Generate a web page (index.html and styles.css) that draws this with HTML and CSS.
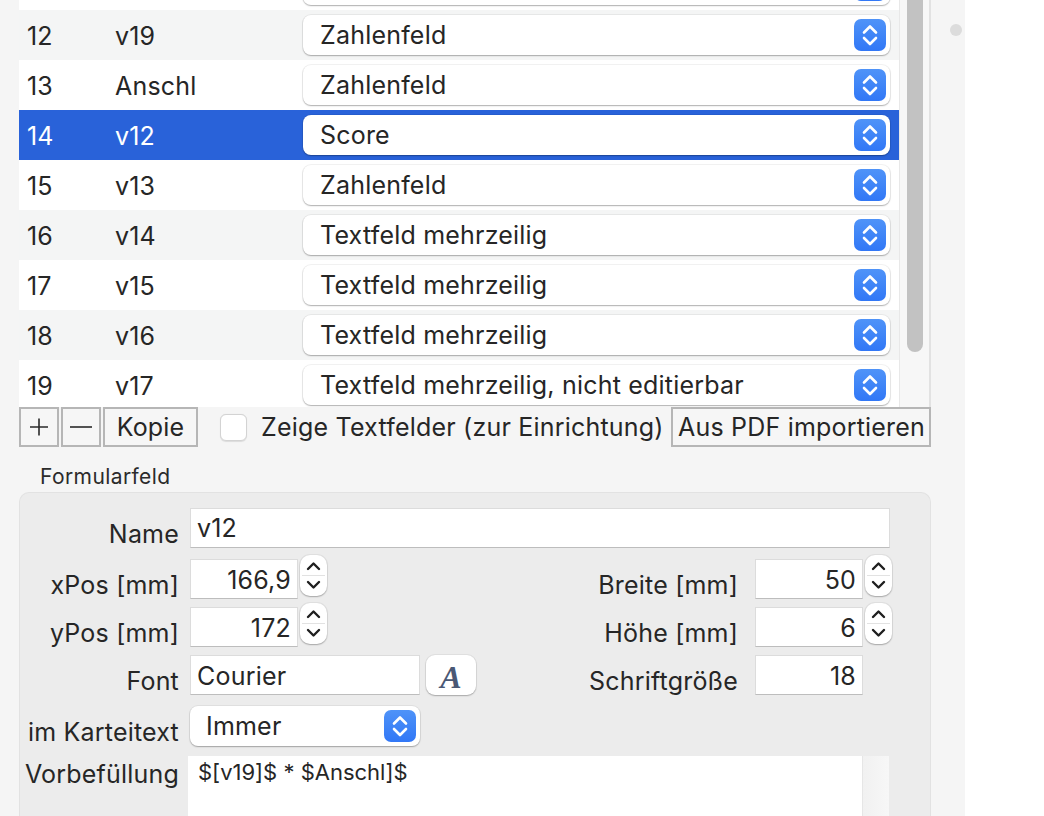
FILE: index.html
```html
<!DOCTYPE html>
<html lang="de">
<head>
<meta charset="utf-8">
<title>Formularfelder</title>
<link rel="stylesheet" href="styles.css">
</head>
<body>
<div class="app">
  <div class="main">
    <div class="content">
      <div class="table">
        <div class="rows">
          <div class="row">
            <div class="num"></div><div class="name"></div>
            <div class="popup"><span class="plbl"></span><span class="chev"><svg viewBox="0 0 32 32" width="32" height="32"><path d="M10 13.5 L16 7.5 L22 13.5 M10 19 L16 25 L22 19" fill="none" stroke="#fff" stroke-width="2.6" stroke-linecap="round" stroke-linejoin="round"/></svg></span></div>
          </div>
          <div class="row alt">
            <div class="num">12</div><div class="name">v19</div>
            <div class="popup"><span class="plbl">Zahlenfeld</span><span class="chev"><svg viewBox="0 0 32 32" width="32" height="32"><path d="M10 13.5 L16 7.5 L22 13.5 M10 19 L16 25 L22 19" fill="none" stroke="#fff" stroke-width="2.6" stroke-linecap="round" stroke-linejoin="round"/></svg></span></div>
          </div>
          <div class="row">
            <div class="num">13</div><div class="name">Anschl</div>
            <div class="popup"><span class="plbl">Zahlenfeld</span><span class="chev"><svg viewBox="0 0 32 32" width="32" height="32"><path d="M10 13.5 L16 7.5 L22 13.5 M10 19 L16 25 L22 19" fill="none" stroke="#fff" stroke-width="2.6" stroke-linecap="round" stroke-linejoin="round"/></svg></span></div>
          </div>
          <div class="row sel">
            <div class="num">14</div><div class="name">v12</div>
            <div class="popup"><span class="plbl">Score</span><span class="chev"><svg viewBox="0 0 32 32" width="32" height="32"><path d="M10 13.5 L16 7.5 L22 13.5 M10 19 L16 25 L22 19" fill="none" stroke="#fff" stroke-width="2.6" stroke-linecap="round" stroke-linejoin="round"/></svg></span></div>
          </div>
          <div class="row">
            <div class="num">15</div><div class="name">v13</div>
            <div class="popup"><span class="plbl">Zahlenfeld</span><span class="chev"><svg viewBox="0 0 32 32" width="32" height="32"><path d="M10 13.5 L16 7.5 L22 13.5 M10 19 L16 25 L22 19" fill="none" stroke="#fff" stroke-width="2.6" stroke-linecap="round" stroke-linejoin="round"/></svg></span></div>
          </div>
          <div class="row alt">
            <div class="num">16</div><div class="name">v14</div>
            <div class="popup"><span class="plbl">Textfeld mehrzeilig</span><span class="chev"><svg viewBox="0 0 32 32" width="32" height="32"><path d="M10 13.5 L16 7.5 L22 13.5 M10 19 L16 25 L22 19" fill="none" stroke="#fff" stroke-width="2.6" stroke-linecap="round" stroke-linejoin="round"/></svg></span></div>
          </div>
          <div class="row">
            <div class="num">17</div><div class="name">v15</div>
            <div class="popup"><span class="plbl">Textfeld mehrzeilig</span><span class="chev"><svg viewBox="0 0 32 32" width="32" height="32"><path d="M10 13.5 L16 7.5 L22 13.5 M10 19 L16 25 L22 19" fill="none" stroke="#fff" stroke-width="2.6" stroke-linecap="round" stroke-linejoin="round"/></svg></span></div>
          </div>
          <div class="row alt">
            <div class="num">18</div><div class="name">v16</div>
            <div class="popup"><span class="plbl">Textfeld mehrzeilig</span><span class="chev"><svg viewBox="0 0 32 32" width="32" height="32"><path d="M10 13.5 L16 7.5 L22 13.5 M10 19 L16 25 L22 19" fill="none" stroke="#fff" stroke-width="2.6" stroke-linecap="round" stroke-linejoin="round"/></svg></span></div>
          </div>
          <div class="row">
            <div class="num">19</div><div class="name">v17</div>
            <div class="popup"><span class="plbl">Textfeld mehrzeilig, nicht editierbar</span><span class="chev"><svg viewBox="0 0 32 32" width="32" height="32"><path d="M10 13.5 L16 7.5 L22 13.5 M10 19 L16 25 L22 19" fill="none" stroke="#fff" stroke-width="2.6" stroke-linecap="round" stroke-linejoin="round"/></svg></span></div>
          </div>
        </div>
        <div class="scrollbar"><div class="thumb"></div></div>
      </div>

      <div class="toolbar">
        <div class="tbtn tb-plus"><svg viewBox="0 0 20 20" width="20" height="20"><path d="M1 10 H19 M10 1.5 V18.5" stroke="#2a2a2a" stroke-width="1.6" fill="none"/></svg></div>
        <div class="tbtn tb-minus"><svg viewBox="0 0 22 4" width="22" height="4"><path d="M0 2 H22" stroke="#2a2a2a" stroke-width="1.6" fill="none"/></svg></div>
        <div class="tbtn tb-copy">Kopie</div>
        <div class="checkbox"></div>
        <div class="cblabel">Zeige Textfelder (zur Einrichtung)</div>
        <div class="tbtn tb-import">Aus PDF importieren</div>
      </div>

      <div class="section-title">Formularfeld</div>

      <div class="group">
        <div class="frow r-name">
          <div class="flabel">Name</div>
          <div class="field f-name">v12</div>
        </div>
        <div class="frow r-xpos">
          <div class="flabel">xPos [mm]</div>
          <div class="field f-num">166,9</div>
          <div class="stepper"><svg viewBox="0 0 27 41" width="27" height="41"><path d="M2 20.5 H25" stroke="#e2e2e2" stroke-width="1"/><path d="M8 14 L13.5 8.5 L19 14 M8 27 L13.5 32.5 L19 27" fill="none" stroke="#1f1f1f" stroke-width="2.4" stroke-linecap="round" stroke-linejoin="round"/></svg></div>
          <div class="spacer"></div>
          <div class="rlabel">Breite [mm]</div>
          <div class="field f-num">50</div>
          <div class="stepper"><svg viewBox="0 0 27 41" width="27" height="41"><path d="M2 20.5 H25" stroke="#e2e2e2" stroke-width="1"/><path d="M8 14 L13.5 8.5 L19 14 M8 27 L13.5 32.5 L19 27" fill="none" stroke="#1f1f1f" stroke-width="2.4" stroke-linecap="round" stroke-linejoin="round"/></svg></div>
        </div>
        <div class="frow r-ypos">
          <div class="flabel">yPos [mm]</div>
          <div class="field f-num">172</div>
          <div class="stepper"><svg viewBox="0 0 27 41" width="27" height="41"><path d="M2 20.5 H25" stroke="#e2e2e2" stroke-width="1"/><path d="M8 14 L13.5 8.5 L19 14 M8 27 L13.5 32.5 L19 27" fill="none" stroke="#1f1f1f" stroke-width="2.4" stroke-linecap="round" stroke-linejoin="round"/></svg></div>
          <div class="spacer"></div>
          <div class="rlabel">Höhe [mm]</div>
          <div class="field f-num">6</div>
          <div class="stepper"><svg viewBox="0 0 27 41" width="27" height="41"><path d="M2 20.5 H25" stroke="#e2e2e2" stroke-width="1"/><path d="M8 14 L13.5 8.5 L19 14 M8 27 L13.5 32.5 L19 27" fill="none" stroke="#1f1f1f" stroke-width="2.4" stroke-linecap="round" stroke-linejoin="round"/></svg></div>
        </div>
        <div class="frow r-font">
          <div class="flabel">Font</div>
          <div class="field f-font">Courier</div>
          <div class="fontbtn">A</div>
          <div class="spacer"></div>
          <div class="rlabel">Schriftgröße</div>
          <div class="field f-num">18</div>
          <div class="stepper-ph"></div>
        </div>
        <div class="frow r-kartei">
          <div class="flabel">im Karteitext</div>
          <div class="popup p-small"><span class="plbl">Immer</span><span class="chev"><svg viewBox="0 0 32 32" width="32" height="32"><path d="M10 13.5 L16 7.5 L22 13.5 M10 19 L16 25 L22 19" fill="none" stroke="#fff" stroke-width="2.6" stroke-linecap="round" stroke-linejoin="round"/></svg></span></div>
        </div>
        <div class="frow r-vorb">
          <div class="flabel vlabel">Vorbefüllung</div>
          <div class="textarea">$[v19]$ * $Anschl]$</div>
          <div class="tscroll"></div>
        </div>
      </div>
    </div>
    <div class="gutter"><div class="dot"></div></div>
  </div>
  <div class="blank"></div>
</div>
</body>
</html>
```

FILE: styles.css
```css
* { box-sizing: border-box; }
html, body { margin: 0; padding: 0; }
body {
  width: 1044px;
  height: 816px;
  overflow: hidden;
  background: #ffffff;
  font-family: Inter, "Noto Sans", sans-serif;
  font-size: 25px;
  letter-spacing: 0.2px;
  color: #262626;
}
.app { display: flex; height: 816px; overflow: hidden; }
.main {
  width: 965px;
  flex: none;
  display: flex;
  background: #f5f5f5;
  padding-left: 19px;
  overflow: hidden;
}
.blank { flex: 1; background: #ffffff; }
.content { width: 912px; display: flex; flex-direction: column; }
.gutter { width: 34px; padding-top: 24px; padding-left: 19px; }
.dot { width: 12px; height: 12px; border-radius: 50%; background: #dcdcdc; }

/* table */
.table { height: 407px; display: flex; overflow: hidden; flex: none; }
.rows { width: 880px; margin-top: -40px; background: #ffffff; }
.row { height: 50px; display: flex; align-items: center; }
.row.alt { background: #f4f5f5; }
.row.sel { background: #2962d9; color: #ffffff; }
.num { width: 96px; padding-left: 8px; line-height: 50px; padding-top: 2px; }
.name { width: 188px; line-height: 50px; padding-top: 2px; }
.popup {
  width: 587px;
  height: 40px;
  background: #ffffff;
  border-radius: 8px;
  box-shadow: 0 0 0 1px rgba(0,0,0,0.05), 0 1px 1.5px rgba(0,0,0,0.28);
  display: flex;
  align-items: center;
  justify-content: space-between;
  padding-left: 17px;
  padding-right: 4px;
  color: #262626;
}
.plbl { line-height: 40px; white-space: nowrap; }
.chev {
  width: 32px;
  height: 32px;
  border-radius: 7px;
  background: linear-gradient(#4f93f8, #3177f6);
  display: flex;
}
.scrollbar {
  width: 32px;
  background: #f7f7f7;
  border-left: 1px solid #e8e8e8;
  border-right: 2px solid #e2e2e2;
  padding-left: 7px;
}
.thumb { width: 16px; height: 360px; margin-top: -8px; border-radius: 8px; background: #c2c2c2; }

/* toolbar */
.toolbar { height: 40px; display: flex; align-items: center; flex: none; }
.tbtn {
  height: 40px;
  border: 2px solid #b6b6b6;
  background: #f6f6f6;
  display: flex;
  align-items: center;
  justify-content: center;
  line-height: 36px;
}
.tb-plus { width: 40px; margin-right: 2px; }
.tb-minus { width: 40px; margin-right: 2px; }
.tb-copy { width: 95px; }
.tb-import { width: 260px; margin-left: auto; justify-content: flex-start; padding-left: 5px; white-space: nowrap; }
.checkbox {
  width: 27px;
  height: 27px;
  margin-left: 22px;
  border-radius: 6px;
  background: #ffffff;
  border: 1px solid #d3d3d3;
  box-shadow: 0 0.5px 1px rgba(0,0,0,0.1);
}
.cblabel { margin-left: 14px; white-space: nowrap; }

.section-title {
  height: 45px;
  flex: none;
  padding: 18px 0 0 21px;
  font-size: 21px;
  letter-spacing: 0.4px;
  line-height: 24px;
  color: #2b2b2b;
}

/* group box */
.group {
  flex: 1;
  background: #ececec;
  border: 1px solid #e2e2e2;
  border-bottom: none;
  border-radius: 10px 10px 0 0;
  padding: 15px 38px 0 0;
  display: flex;
  flex-direction: column;
}
.frow { display: flex; align-items: flex-start; height: 40px; flex: none; }
.r-xpos { margin-top: 11px; }
.r-ypos { margin-top: 8px; }
.r-font { margin-top: 8px; }
.r-kartei { margin-top: 11px; }
.r-vorb { margin-top: 10px; height: 60px; }
.flabel {
  width: 159px;
  margin-right: 11px;
  text-align: right;
  line-height: 40px;
  padding-top: 6px;
  white-space: nowrap;
}
.rlabel { line-height: 40px; padding-top: 6px; margin-right: 17px; white-space: nowrap; }
.spacer { flex: 1; }
.field {
  height: 40px;
  background: #ffffff;
  border: 1px solid #dcdcdc;
  border-bottom-color: #bdbdbd;
  line-height: 38px;
  padding: 1px 7px 0 6px;
  white-space: nowrap;
}
.f-name { width: 700px; padding-top: 0; }
.f-num { width: 108px; text-align: right; padding-right: 6px; }
.f-font { width: 230px; }
.stepper {
  width: 27px;
  height: 41px;
  margin-left: 2px;
  margin-top: -4px;
  background: #ffffff;
  border-radius: 10px;
  box-shadow: 0 0 0 1px rgba(0,0,0,0.05), 0 1px 1.5px rgba(0,0,0,0.25);
  display: flex;
}
.stepper-ph { width: 29px; }
.fontbtn {
  width: 50px;
  height: 40px;
  margin-left: 6px;
  background: #ffffff;
  border-radius: 9px;
  box-shadow: 0 0 0 1px rgba(0,0,0,0.05), 0 1px 1.5px rgba(0,0,0,0.25);
  font-family: "Liberation Serif", serif;
  font-style: italic;
  font-weight: bold;
  font-size: 32px;
  letter-spacing: 0;
  line-height: 40px;
  text-align: center;
  color: #4a5875;
  padding-top: 2px;
}
.p-small { width: 230px; padding-left: 16px; }
.vlabel { padding-top: 0; margin-top: -2px; margin-right: 9px; }
.textarea {
  width: 674px;
  height: 60px;
  background: #ffffff;
  font-size: 22px;
  letter-spacing: 0;
  line-height: 28px;
  padding: 2px 10px 0;
  white-space: nowrap;
}
.tscroll { width: 27px; height: 60px; background: linear-gradient(90deg, #f1f1f1, #f7f7f7); border-left: 1px solid #e6e6e6; }
```
